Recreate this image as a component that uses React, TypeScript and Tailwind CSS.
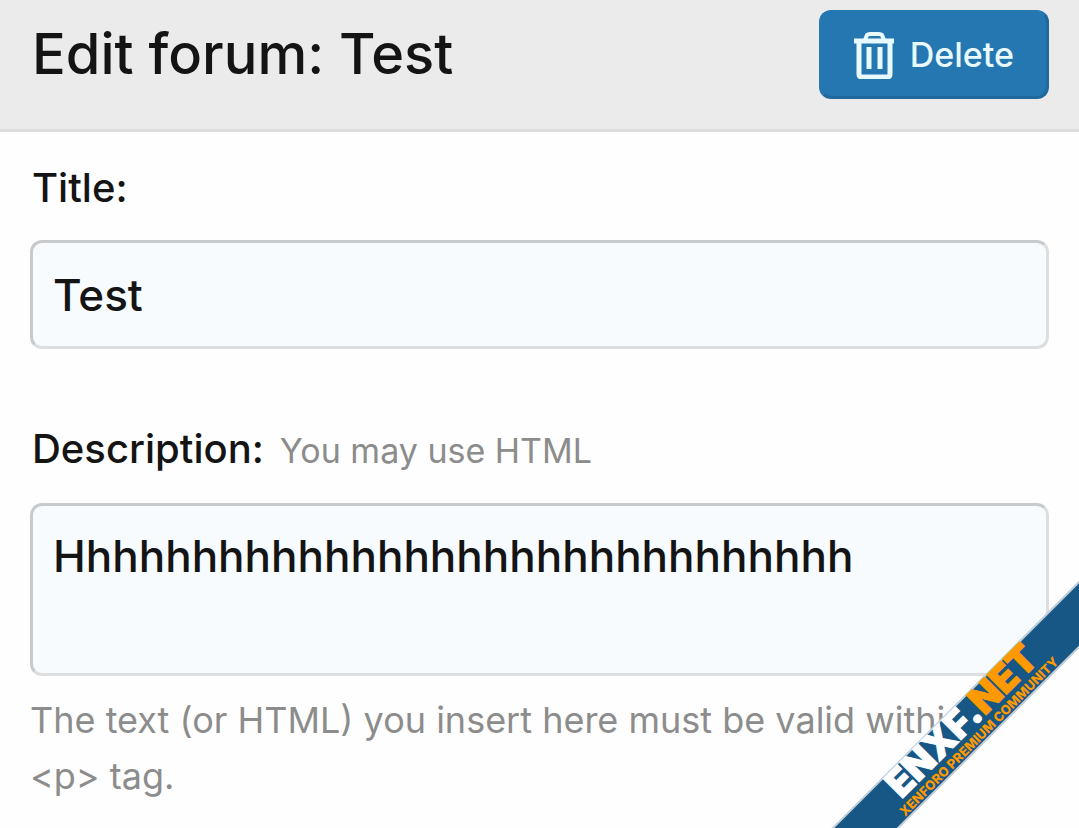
import React, { useState } from 'react';

const TrashIcon: React.FC = () => (
  <svg
    className="h-12 w-10 shrink-0"
    viewBox="0 0 40 48"
    fill="none"
    stroke="currentColor"
    strokeWidth="4"
    strokeLinejoin="round"
    aria-hidden="true"
  >
    <path d="M0 10h41" strokeWidth="5" />
    <path d="M11 9l2-5q1-1 3-1h9q2 0 3 1l2 5" />
    <path d="M5 10v33q0 3 3 3h25q3 0 3-3V10" strokeWidth="5" />
    <path d="M15 16v22M26 16v22" strokeWidth="5" />
  </svg>
);

const CornerRibbon: React.FC = () => (
  <svg
    className="pointer-events-none absolute right-0 bottom-0 h-[248px] w-[248px]"
    viewBox="0 0 248 248"
    role="img"
    aria-label="ENXF.NET"
  >
    <path d="M249 1V66L66 249H1Z" fill="#175785" stroke="#c3ced6" strokeWidth="2" />
    <g transform="translate(72 218) rotate(-45)" className="text-[38px] font-black">
      <text x="-2" y="0" fill="#ffffff" stroke="#ffffff">
        ENXF.
        <tspan fill="#ff9900" stroke="#ff9900">
          NET
        </tspan>
      </text>
    </g>
    <g transform="translate(74 237) rotate(-45)" className="text-[13px] font-extrabold">
      <text x="0" y="0" fill="#ff9900">
        XENFORO PREMIUM COMMUNITY
      </text>
    </g>
  </svg>
);

const fieldClass =
  'mt-6 block w-full rounded-xl border-3 border-t-[#c8cacc] border-l-[#c8cacc] border-r-[#dcdee0] border-b-[#dcdee0] bg-[#f7fbfe] px-5 text-[44px] font-medium text-[#141414] outline-none';

export default function App() {
  const [title, setTitle] = useState('Test');
  const [description, setDescription] = useState('H' + 'h'.repeat(29));

  return (
    <div className="relative min-h-screen overflow-hidden bg-[#fefefe] font-['Inter',sans-serif] text-[#141414]">
      <header className="flex items-start justify-between border-b-3 border-[#dcdcdc] bg-[#ebebeb] pt-[10px] pr-[30px] pb-[30px] pl-8">
        <h1 className="text-[56px] leading-[88px] font-medium">Edit forum: Test</h1>
        <button
          type="button"
          className="flex h-[89px] items-center gap-4 rounded-xl border-3 border-[#2577b1] border-r-[#20699c] border-b-[#20699c] bg-[#2577b1] px-8 text-[34px] font-medium text-[#e9faff]"
        >
          <TrashIcon />
          Delete
        </button>
      </header>

      <form className="px-[30px]" onSubmit={(e) => e.preventDefault()}>
        <div className="pt-7">
          <label htmlFor="title" className="block pl-[2px] text-[40px] leading-[56px] font-medium">
            Title:
          </label>
          <input
            id="title"
            type="text"
            className={`${fieldClass} h-[109px]`}
            value={title}
            onChange={(e) => setTitle(e.target.value)}
          />
        </div>

        <div className="pt-[72px]">
          <div className="flex items-baseline gap-4 pl-[2px] leading-[56px]">
            <label htmlFor="description" className="text-[40px] font-medium">
              Description:
            </label>
            <span id="description-hint" className="text-[34px] text-[#8c8c8c]">
              You may use HTML
            </span>
          </div>
          <textarea
            id="description"
            aria-describedby="description-hint description-help"
            className={`${fieldClass} h-[173px] resize-none py-[22px] leading-[56px]`}
            value={description}
            onChange={(e) => setDescription(e.target.value)}
          />
          <p id="description-help" className="mt-4 text-[36px] leading-[56px] text-[#8c8c8c]">
            The text (or HTML) you insert here must be valid within a &lt;p&gt; tag.
          </p>
        </div>
      </form>

      <CornerRibbon />
    </div>
  );
}
